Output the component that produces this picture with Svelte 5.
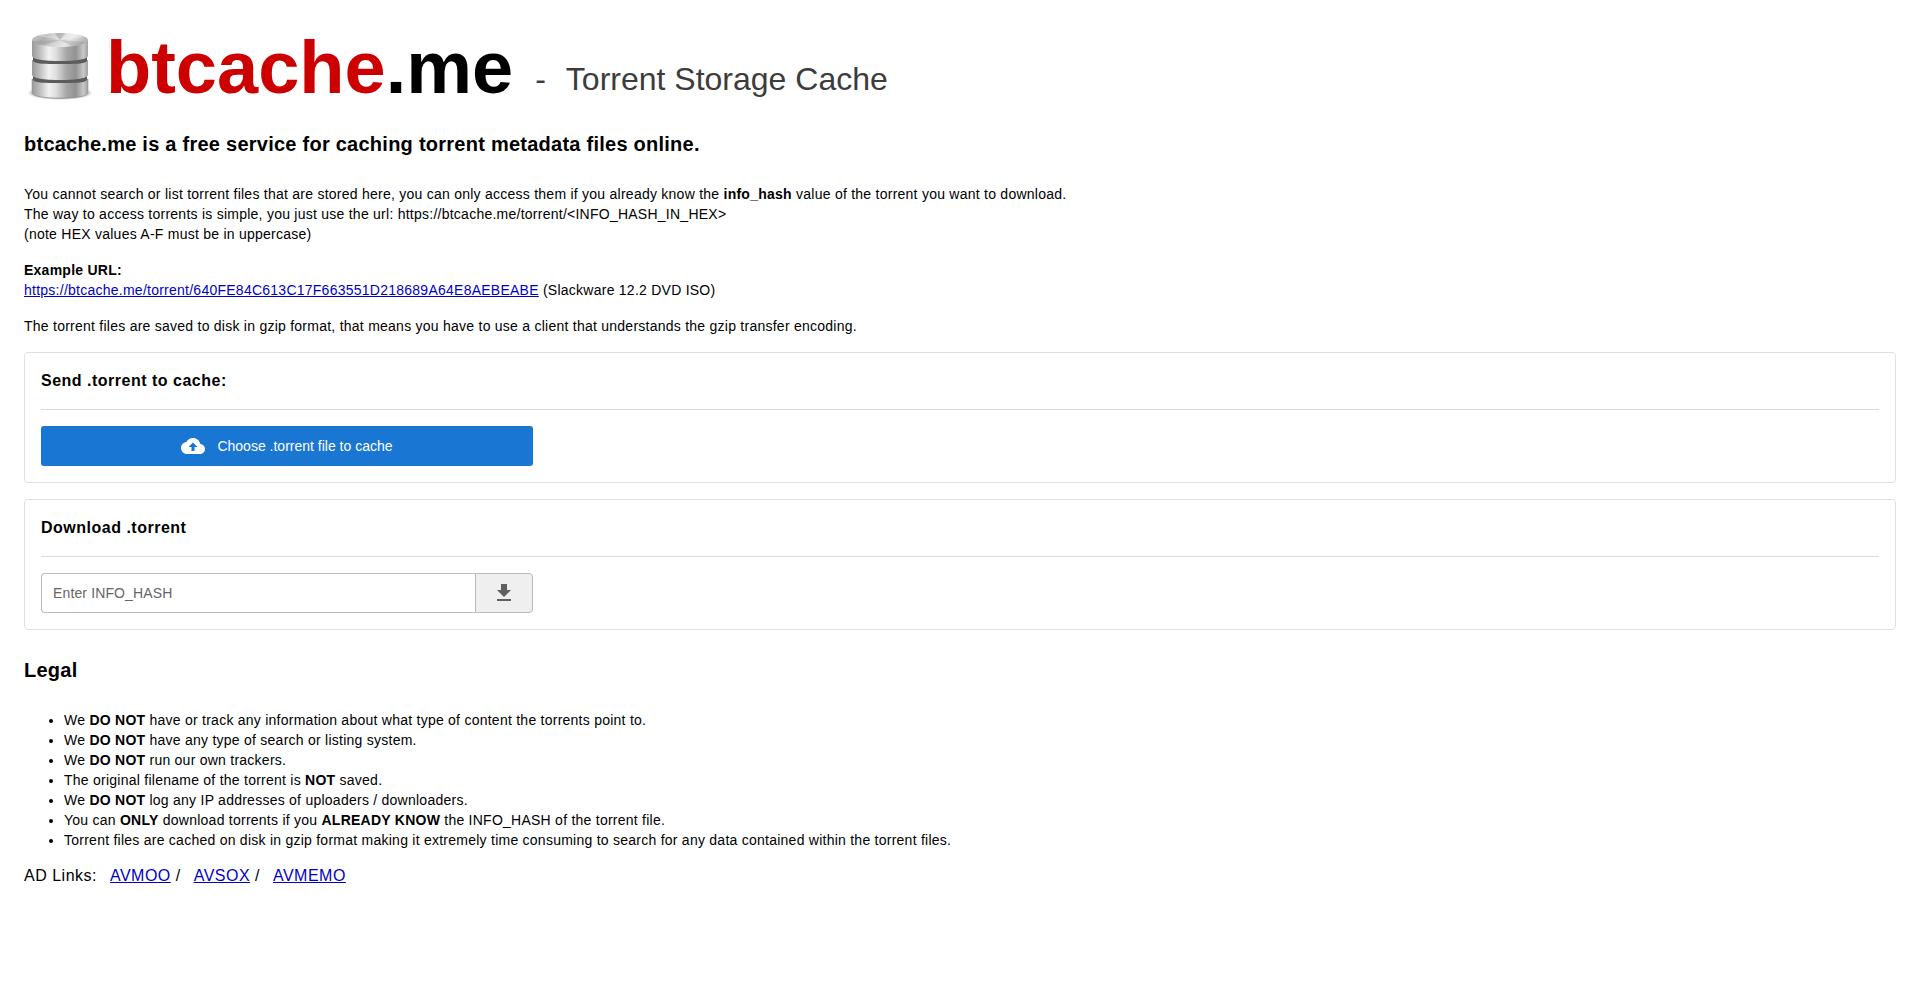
<script>
	const exampleUrl = 'https://btcache.me/torrent/640FE84C613C17F663551D218689A64E8AEBEABE';

	let infoHash = $state('');
	let fileInput;

	function download(e) {
		e.preventDefault();
		const hash = infoHash.trim().toUpperCase();
		if (hash) window.location.href = `https://btcache.me/torrent/${hash}`;
	}
</script>

<main class="page">
	<h1 class="brand">
		<svg class="disk" width="72" height="80" viewBox="0 0 72 80" aria-hidden="true">
			<defs>
				<linearGradient id="metal" x1="0" x2="1" y1="0" y2="0">
					<stop offset="0" stop-color="#9a9a9a" />
					<stop offset="0.12" stop-color="#b8b8b8" />
					<stop offset="0.3" stop-color="#f2f2f2" />
					<stop offset="0.42" stop-color="#e0e0e0" />
					<stop offset="0.62" stop-color="#a6a6a6" />
					<stop offset="0.78" stop-color="#929292" />
					<stop offset="0.92" stop-color="#c8c8c8" />
					<stop offset="1" stop-color="#a0a0a0" />
				</linearGradient>
				<linearGradient id="lid" x1="0" x2="1" y1="0" y2="0.25">
					<stop offset="0" stop-color="#c8c8c8" />
					<stop offset="0.3" stop-color="#b0b0b0" />
					<stop offset="0.55" stop-color="#d4d4d4" />
					<stop offset="0.75" stop-color="#e8e8e8" />
					<stop offset="1" stop-color="#b8b8b8" />
				</linearGradient>
				<radialGradient id="shade">
					<stop offset="0.75" stop-color="#555" stop-opacity="0.6" />
					<stop offset="1" stop-color="#999" stop-opacity="0" />
				</radialGradient>
			</defs>
			<ellipse cx="36" cy="69" rx="33" ry="7" fill="url(#shade)" />
			<path d="M8 55v14c0 3 12 5 28 5s28-2 28-5V55z" fill="url(#metal)" stroke="#888" stroke-width="0.5" />
			<path d="M9 52v4c2 3 12 3 27 3s25 0 27-3v-4z" fill="#5c5c5c" />
			<path d="M8 36v15c0 3 12 5 28 5s28-2 28-5V36z" fill="url(#metal)" />
			<path d="M9 33v4c2 3 12 3 27 3s25 0 27-3v-4z" fill="#5c5c5c" />
			<path d="M8 16v16c0 3 12 5 28 5s28-2 28-5V16z" fill="url(#metal)" />
			<ellipse cx="36" cy="16" rx="28" ry="7" fill="url(#lid)" />
			<path d="M36 16 14 12q8-2 16-3zM36 16l8-7q10 1 15 4z" fill="#fff" opacity="0.3" />
			<path d="M36 16 8 17q2 3 12 4zM36 16l-5-7h10zM36 16l26 2q-4 3-14 4z" fill="#888" opacity="0.3" />
		</svg>
		<span class="name"><span class="red">btcache</span>.me</span>
		<span class="dash">-</span>
		<span class="tagline">Torrent Storage Cache</span>
	</h1>

	<h2 class="heading">btcache.me is a free service for caching torrent metadata files online.</h2>

	<p class="text">
		You cannot search or list torrent files that are stored here, you can only access them if you already know the <b>info_hash</b> value of the torrent you want to download.<br />
		The way to access torrents is simple, you just use the url: https://btcache.me/torrent/&lt;INFO_HASH_IN_HEX&gt;<br />
		(note HEX values A-F must be in uppercase)
	</p>
	<p class="text">
		<b>Example URL:</b><br />
		<a href={exampleUrl}>{exampleUrl}</a> (Slackware 12.2 DVD ISO)
	</p>
	<p class="text">
		The torrent files are saved to disk in gzip format, that means you have to use a client that understands the gzip transfer encoding.
	</p>

	<section class="card">
		<h3 class="title">Send .torrent to cache:</h3>
		<hr />
		<button type="button" class="upload" onclick={() => fileInput.click()}>
			<svg width="24" height="24" viewBox="0 0 24 24" fill="currentColor" aria-hidden="true">
				<path d="M19.35 10.04C18.67 6.59 15.64 4 12 4 9.11 4 6.6 5.64 5.35 8.04 2.34 8.36 0 10.91 0 14c0 3.31 2.69 6 6 6h13c2.76 0 5-2.24 5-5 0-2.64-2.05-4.78-4.65-4.96zM13.5 13v4h-3v-4H7.5L12 8.5l4.5 4.5z" />
			</svg>
			<span>Choose .torrent file to cache</span>
		</button>
		<input bind:this={fileInput} type="file" accept=".torrent" aria-label="Torrent file" hidden />
	</section>

	<section class="card">
		<h3 class="title">Download .torrent</h3>
		<hr />
		<form class="search" onsubmit={download}>
			<input type="text" placeholder="Enter INFO_HASH" aria-label="Enter INFO_HASH" bind:value={infoHash} />
			<button type="submit" aria-label="Download">
				<svg width="24" height="24" viewBox="0 0 24 24" fill="currentColor" aria-hidden="true">
					<path d="M19 9h-4V3H9v6H5l7 7 7-7zM5 18v2h14v-2H5z" />
				</svg>
			</button>
		</form>
	</section>

	<h2 class="heading">Legal</h2>

	<ul class="text legal">
		<li>We <b>DO NOT</b> have or track any information about what type of content the torrents point to.</li>
		<li>We <b>DO NOT</b> have any type of search or listing system.</li>
		<li>We <b>DO NOT</b> run our own trackers.</li>
		<li>The original filename of the torrent is <b>NOT</b> saved.</li>
		<li>We <b>DO NOT</b> log any IP addresses of uploaders / downloaders.</li>
		<li>You can <b>ONLY</b> download torrents if you <b>ALREADY KNOW</b> the INFO_HASH of the torrent file.</li>
		<li>Torrent files are cached on disk in gzip format making it extremely time consuming to search for any data contained within the torrent files.</li>
	</ul>

	<div class="ads">
		AD Links:
		<a href="#avmoo">AVMOO</a> /
		<a href="#avsox">AVSOX</a> /
		<a href="#avmemo">AVMEMO</a>
	</div>
</main>

<style>
	:global(body) {
		margin: 0;
		background: #fff;
	}

	.page {
		padding: 24px;
		font-family: 'Liberation Sans', Arial, sans-serif;
		font-size: 16px;
		line-height: 24px;
		letter-spacing: 0.03125em;
		color: #000;
	}

	a { color: #0000c8; }

	.brand {
		display: flex;
		align-items: flex-start;
		margin: 0 0 24px;
		height: 80px;
		letter-spacing: normal;
	}
	.disk { flex-shrink: 0; }
	.name {
		margin-left: 10px;
		font-size: 74px;
		line-height: 88px;
	}
	.red { color: #c00; }
	.dash, .tagline {
		margin-left: 22px;
		font-size: 32px;
		font-weight: 400;
		line-height: 110px;
		color: #3c3c3c;
	}
	.tagline { margin-left: 20px; }

	.heading {
		margin: 24px 0;
		font-size: 20px;
		line-height: 32px;
		letter-spacing: 0.0125em;
	}

	.text {
		margin: 0 0 16px;
		font-size: 14px;
		line-height: 20px;
		letter-spacing: 0.0178em;
	}

	.card {
		margin-bottom: 16px;
		padding: 16px;
		border: 1px solid #e0e0e0;
		border-radius: 4px;
	}
	.title {
		margin: 0;
		font-size: 16px;
		line-height: 24px;
	}
	hr {
		margin: 16px 0;
		border: 0;
		border-top: 1px solid #dcdcdc;
	}

	.upload, .search {
		display: flex;
		width: 100%;
		max-width: 492px;
		height: 40px;
		box-sizing: border-box;
	}
	.upload {
		align-items: center;
		justify-content: center;
		gap: 12px;
		padding: 0 16px;
		border: 0;
		border-radius: 3px;
		background: #1976d2;
		color: #fff;
		font-family: inherit;
		font-size: 14px;
		cursor: pointer;
	}

	.search input {
		flex: 1;
		min-width: 0;
		padding: 0 11px;
		border: 1px solid #bbb;
		border-right: 0;
		border-radius: 4px 0 0 4px;
		font-family: inherit;
		font-size: 14px;
		letter-spacing: 0.0094em;
	}
	.search input::placeholder { color: #666; }
	.search button {
		display: flex;
		align-items: center;
		justify-content: center;
		width: 58px;
		padding: 0;
		border: 1px solid #bbb;
		border-radius: 0 4px 4px 0;
		background: #efefef;
		color: #616161;
		cursor: pointer;
	}

	.legal {
		margin-bottom: 14px;
		padding-left: 40px;
	}

	.ads a { margin-left: 8px; }
</style>
